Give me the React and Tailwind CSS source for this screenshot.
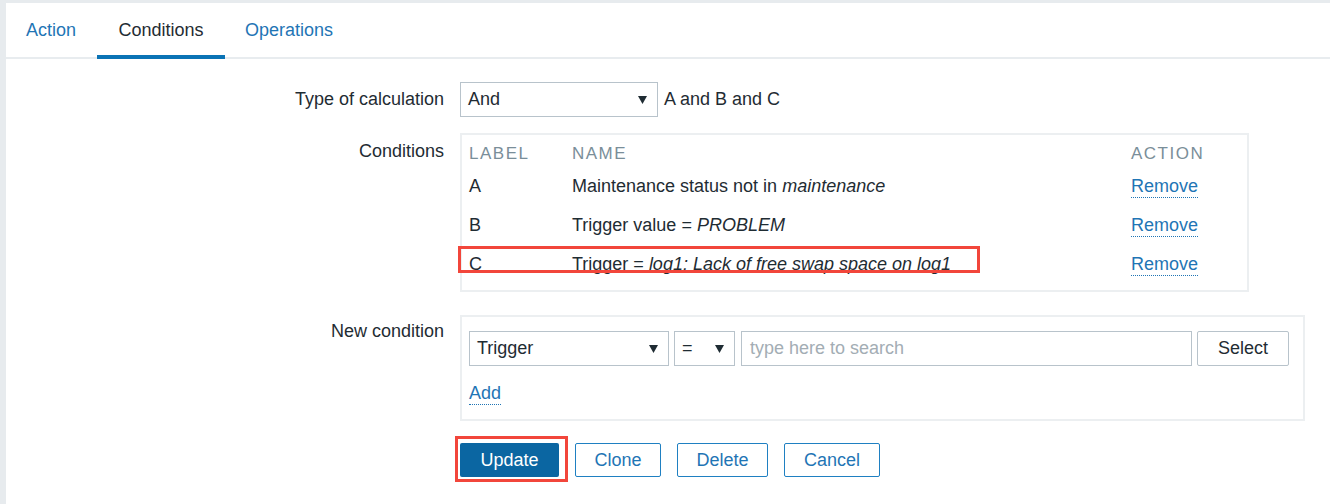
import React from "react";

const Arrow = () => (
  <svg width="9" height="8" viewBox="0 0 9 8" className="shrink-0">
    <polygon points="0,0 9,0 4.5,8" fill="#1f2c33" />
  </svg>
);

function Select({ value, className }) {
  return (
    <div
      className={
        "flex items-center justify-between h-[35px] border border-[#b8c3cb] bg-white pl-[7px] pr-[10px] text-[#1f2c33] " +
        className
      }
    >
      <span>{value}</span>
      <Arrow />
    </div>
  );
}

function Link({ children }) {
  return (
    <span className="inline-block leading-[21px] text-[#1f75b5] border-b border-dotted border-[#1f75b5]">
      {children}
    </span>
  );
}

export default function App() {
  const rows = [
    { l: "A", name: "Maintenance status not in ", it: "maintenance" },
    { l: "B", name: "Trigger value = ", it: "PROBLEM" },
    { l: "C", name: "Trigger = ", it: "log1: Lack of free swap space on log1" },
  ];
  return (
    <div
      className="w-[1330px] h-[504px] bg-[#e7ebee] pl-[6px] pt-[3px] overflow-hidden text-[18px] text-[#1f2c33]"
      style={{ fontFamily: '"Liberation Sans", Arial, sans-serif' }}
    >
      <div className="bg-white h-full">
        {/* Tabs */}
        <div className="flex h-[56px] border-b-2 border-[#e8ecef]">
          <div className="relative flex items-center pl-5 w-[90px] text-[#1f75b5]">Action</div>
          <div className="relative flex items-center justify-center w-[128px] ml-px text-[#1f2c33]">
            Conditions
            <div className="absolute left-0 right-0 bottom-[-2px] h-1 bg-[#0a73b5]" />
          </div>
          <div className="relative flex items-center px-5 text-[#1f75b5]">Operations</div>
        </div>

        {/* Form */}
        <div className="grid grid-cols-[438px_1fr] gap-x-4">
          {/* Row 1 */}
          <div className="mt-[23px] h-[35px] flex items-center justify-end">Type of calculation</div>
          <div className="mt-[23px] flex items-center">
            <Select value="And" className="w-[198px]" />
            <span className="ml-[6px]">A and B and C</span>
          </div>

          {/* Row 2 */}
          <div className="mt-[16px] pt-[8px] text-right leading-[21px]">Conditions</div>
          <div className="mt-[16px]">
            <div className="relative w-[789px] border-2 border-[#eceff1] pt-[6px] pb-[6px] pl-[7px] pr-[6px]">
              <div className="grid grid-cols-[103px_1fr_110px]">
                <div className="h-[26px] flex items-center text-[17px] tracking-[1.5px] text-[#7a8e99]">LABEL</div>
                <div className="h-[26px] flex items-center text-[17px] tracking-[1.5px] text-[#7a8e99]">NAME</div>
                <div className="h-[26px] flex items-center text-[17px] tracking-[1.5px] text-[#7a8e99]">ACTION</div>
                {rows.map((r) => (
                  <React.Fragment key={r.l}>
                    <div className="h-[39px] flex items-center">{r.l}</div>
                    <div className="h-[39px] flex items-center whitespace-pre">
                      {r.name}
                      <i>{r.it}</i>
                    </div>
                    <div className="h-[39px] flex items-center">
                      <Link>Remove</Link>
                    </div>
                  </React.Fragment>
                ))}
              </div>
              <div className="absolute left-[-4px] top-[111px] w-[522px] h-[27px] border-[3px] border-[#f2463b]" />
            </div>
          </div>

          {/* Row 3 */}
          <div className="mt-[23px] pt-[6px] text-right leading-[21px]">New condition</div>
          <div className="mt-[23px]">
            <div className="w-[845px] h-[106px] border-2 border-[#eceff1] pl-[7px] pt-[14px]">
              <div className="flex items-center">
                <Select value="Trigger" className="w-[200px]" />
                <Select value="=" className="w-[61px] ml-[5px]" />
                <div className="w-[451px] h-[35px] ml-[6px] border border-[#b8c3cb] flex items-center pl-[8px] text-[#a3adb4]">
                  type here to search
                </div>
                <div className="w-[92px] h-[35px] ml-[5px] border border-[#b8c3cb] rounded-[2px] flex items-center justify-center text-[#1f2c33]">
                  Select
                </div>
              </div>
              <div className="mt-[14px]">
                <Link>Add</Link>
              </div>
            </div>
          </div>

          {/* Row 4 */}
          <div />
          <div className="mt-[22px] flex items-center gap-x-4">
            <div className="relative">
              <div className="w-[99px] h-[34px] bg-[#0b66a2] rounded-[2px] text-white flex items-center justify-center">
                Update
              </div>
              <div className="absolute left-[-5px] top-[-7px] w-[113px] h-[46px] border-[3px] border-[#f2463b]" />
            </div>
            <div className="w-[86px] h-[34px] border border-[#1f80c2] rounded-[2px] text-[#1f75b5] flex items-center justify-center">
              Clone
            </div>
            <div className="w-[91px] h-[34px] border border-[#1f80c2] rounded-[2px] text-[#1f75b5] flex items-center justify-center">
              Delete
            </div>
            <div className="w-[96px] h-[34px] border border-[#1f80c2] rounded-[2px] text-[#1f75b5] flex items-center justify-center">
              Cancel
            </div>
          </div>
        </div>
      </div>
    </div>
  );
}
